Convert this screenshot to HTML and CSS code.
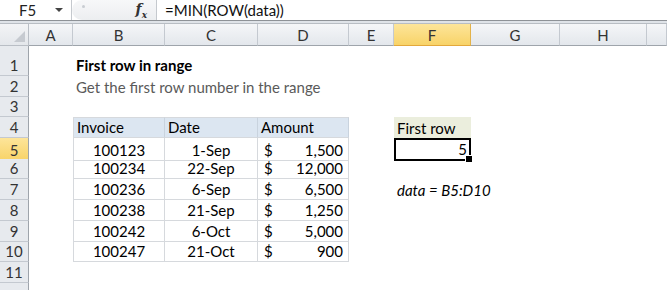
FILE: index.html
```html
<!DOCTYPE html>
<html lang="en">
<head>
    <meta charset="UTF-8">
    <title>First row in range</title>
    <link rel="stylesheet" href="styles.css">
</head>
<body>
    <div class="formula-bar">
        <div class="name-box">
            <span class="cell-ref">F5</span>
            <span class="drop-arrow"></span>
        </div>
        <div class="fx-area">
            <span class="grip"></span>
            <span class="fx">f<sub>x</sub></span>
        </div>
        <div class="formula-input">=MIN(ROW(data))</div>
    </div>
    <div class="bar-gap"></div>

    <div id="sheet" class="sheet"></div>

    <script>
        // columns shown across the top (I is only partly in view)
        const columns = ['A', 'B', 'C', 'D', 'E', 'F', 'G', 'H', 'I'];

        // content of the filled cells, keyed by row then column
        const cells = {
            1: { B: { text: 'First row in range', cls: 'title' } },
            2: { B: { text: 'Get the first row number in the range', cls: 'subtitle' } },
            4: {
                B: { text: 'Invoice', cls: 'tbl tbl-head first' },
                C: { text: 'Date', cls: 'tbl tbl-head' },
                D: { text: 'Amount', cls: 'tbl tbl-head' },
                F: { text: 'First row', cls: 'label' }
            },
            5: { F: { text: '5', cls: 'result' } },
            7: { F: { text: 'data = B5:D10', cls: 'note' } }
        };

        const invoices = [
            ['100123', '1-Sep', '1,500'],
            ['100234', '22-Sep', '12,000'],
            ['100236', '6-Sep', '6,500'],
            ['100238', '21-Sep', '1,250'],
            ['100242', '6-Oct', '5,000'],
            ['100247', '21-Oct', '900']
        ];

        invoices.forEach((inv, i) => {
            const r = 5 + i;
            cells[r] = cells[r] || {};
            cells[r].B = { text: inv[0], cls: 'tbl center first' };
            cells[r].C = { text: inv[1], cls: 'tbl center' };
            cells[r].D = { amount: inv[2], cls: 'tbl money' };
        });

        const sheet = document.getElementById('sheet');

        // header row
        const head = document.createElement('div');
        head.className = 'row col-heads';
        const corner = document.createElement('div');
        corner.className = 'corner';
        head.appendChild(corner);
        columns.forEach(c => {
            const h = document.createElement('div');
            h.className = 'col-head' + (c === 'F' ? ' active' : '');
            h.textContent = c === 'I' ? '' : c;
            head.appendChild(h);
        });
        sheet.appendChild(head);

        for (let r = 1; r <= 12; r++) {
            const row = document.createElement('div');
            row.className = 'row' + (r === 1 ? ' tall' : '');

            const rh = document.createElement('div');
            rh.className = 'row-head' + (r === 5 ? ' active' : '');
            rh.textContent = r < 12 ? r : '';
            row.appendChild(rh);

            columns.forEach(c => {
                const cell = document.createElement('div');
                const data = cells[r] && cells[r][c];
                cell.className = 'cell';
                if (data) {
                    cell.className += ' ' + data.cls;
                    if (data.amount) {
                        cell.innerHTML = '<span>$</span><span>' + data.amount + '</span>';
                    } else {
                        cell.textContent = data.text;
                    }
                }
                row.appendChild(cell);
            });
            sheet.appendChild(row);
        }
    </script>
</body>
</html>
```

FILE: styles.css
```css
* {
    box-sizing: border-box;
}
body {
    margin: 0;
    font-family: Lato, "Open Sans", sans-serif;
    font-size: 15px;
    color: #000;
    background-color: #fff;
    overflow: hidden;
}

/* formula bar */
.formula-bar {
    display: flex;
    height: 21px;
    border-bottom: 1px solid #8e9297;
    background-color: #fff;
}
.name-box {
    width: 72px;
    display: flex;
    align-items: center;
    padding-left: 19px;
    border-right: 1px solid #c5c9ce;
}
.cell-ref {
    flex: 1;
    font-size: 15px;
    color: #222;
}
.drop-arrow {
    width: 0;
    height: 0;
    margin-right: 8px;
    border-left: 4px solid transparent;
    border-right: 4px solid transparent;
    border-top: 4px solid #444;
}
.fx-area {
    width: 85px;
    display: flex;
    align-items: center;
    justify-content: space-between;
    padding: 0 9px 0 10px;
    background: linear-gradient(#f7f8f9, #eceef0);
    border-radius: 10px 0 0 10px;
    border-right: 1px solid #c5c9ce;
}
.grip {
    width: 3px;
    height: 3px;
    margin-top: -8px;
    background-color: #c9cdd2;
    border-radius: 50%;
}
.fx {
    font-family: "DejaVu Serif", serif;
    font-style: italic;
    font-weight: bold;
    font-size: 14px;
    color: #333;
}
.fx sub {
    font-size: 9px;
}
.formula-input {
    flex: 1;
    display: flex;
    align-items: center;
    padding-left: 8px;
    font-size: 15px;
    color: #111;
}
.bar-gap {
    height: 3px;
    background-color: #dfe3e8;
    border-bottom: 1px solid #b8bdc3;
}

/* grid */
.sheet {
    width: 667px;
    overflow: hidden;
}
.row {
    display: grid;
    grid-template-columns: 29px 44px 92px 93px 91px 45px 77px 89px 87px 20px;
    height: 20.7px;
}
.row.tall {
    height: 30px;
}
.row.col-heads {
    height: 22px;
}
.corner {
    background: linear-gradient(#f3f4f6, #e4e7eb);
    border-right: 1px solid #b9bec5;
    border-bottom: 1px solid #b9bec5;
    position: relative;
}
.corner::after {
    content: "";
    position: absolute;
    right: 3px;
    bottom: 3px;
    border-left: 11px solid transparent;
    border-bottom: 11px solid #c6cad0;
}
.col-head {
    display: flex;
    align-items: center;
    justify-content: center;
    background: linear-gradient(#f5f6f8, #e3e7ec);
    border-right: 1px solid #c4c9d0;
    border-bottom: 1px solid #9ea4ab;
    color: #333;
    font-size: 15px;
}
.col-head.active {
    background: linear-gradient(#fde59a, #f8d368);
    border-right-color: #e3b24a;
    border-bottom-color: #e3a83b;
}
.row-head {
    display: flex;
    align-items: flex-end;
    justify-content: center;
    padding-bottom: 1px;
    background-color: #e7eaee;
    border-right: 1px solid #9ea4ab;
    border-bottom: 1px solid #c4c9d0;
    color: #333;
    font-size: 15px;
}
.row-head.active {
    background: linear-gradient(#fde59a, #f8d368);
    border-bottom-color: #e3b24a;
}

.cell {
    display: flex;
    align-items: flex-end;
    padding: 0 3px 1px;
    white-space: nowrap;
    min-width: 0;
}
.title {
    font-weight: bold;
    padding-bottom: 2px;
}
.subtitle {
    color: #5a5a5a;
}
.tbl {
    border-right: 1px solid #d6d9dd;
    border-bottom: 1px solid #d6d9dd;
}
.tbl.first {
    border-left: 1px solid #d6d9dd;
}
.tbl-head {
    background-color: #dce6f1;
    border-top: 1px solid #d6d9dd;
    border-right-color: #c9d3de;
}
.center {
    justify-content: center;
}
.money {
    justify-content: space-between;
    padding: 0 5px 1px 6px;
}
.label {
    background-color: #ebeedd;
    padding-left: 3px;
}
.result {
    justify-content: flex-end;
    border: 2px solid #000;
    position: relative;
    padding-right: 2px;
}
.result::after {
    content: "";
    position: absolute;
    right: -4px;
    bottom: -4px;
    width: 6px;
    height: 6px;
    background-color: #000;
    border: 1px solid #fff;
}
.note {
    font-style: italic;
    padding-left: 3px;
}
```
